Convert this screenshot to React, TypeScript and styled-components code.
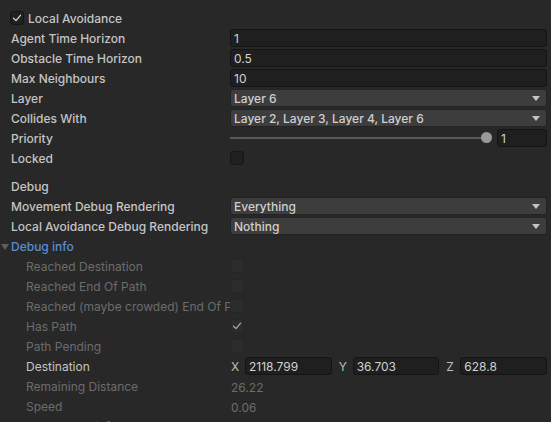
import React from 'react';
import styled, { createGlobalStyle } from 'styled-components';

// === Global ===
const GlobalStyle = createGlobalStyle`
  html, body {
    margin: 0;
    padding: 0;
    background: #282828;
  }
  body {
    font-family: Inter, 'Noto Sans', 'Liberation Sans', sans-serif;
    font-size: 12px;
    color: #c4c4c4;
    overflow: hidden;
  }
`;

// === Layout ===
const Inspector = styled.div`
  width: 551px;
  height: 422px;
  padding-top: 8px;
  box-sizing: border-box;
  overflow: hidden;
`;

const Row = styled.div<{ $spaceBefore?: number }>`
  display: grid;
  grid-template-columns: 230px 1fr;
  align-items: center;
  height: 20px;
  padding-right: 4px;
  margin-top: ${p => p.$spaceBefore ?? 0}px;
`;

type Tone = 'normal' | 'muted' | 'link';

const toneColor: Record<Tone, string> = {
  normal: '#c4c4c4',
  muted: '#6c6c6c',
  link: '#5b8bd4',
};

const Label = styled.div<{ $indent?: number; $tone?: Tone; $light?: boolean }>`
  padding-left: ${p => 11 + (p.$indent ?? 0)}px;
  padding-top: 2px;
  height: 20px;
  box-sizing: border-box;
  white-space: nowrap;
  overflow: hidden;
  font-weight: ${p => (p.$tone === 'muted' || p.$light ? 400 : 500)};
  color: ${p => toneColor[p.$tone ?? 'normal']};
  line-height: 18px;
  position: relative;
`;

const Foldout = styled.span`
  position: absolute;
  left: 1px;
  top: 8px;
  width: 0;
  height: 0;
  border-left: 4px solid transparent;
  border-right: 4px solid transparent;
  border-top: 6px solid #5e5e5e;
`;

const ToggleHeader = styled.div`
  display: flex;
  align-items: center;
  gap: 4px;
  height: 20px;
  padding-left: 10px;
  font-weight: 500;
`;

const HeaderText = styled.span`
  padding-top: 1px;
`;

// === Fields ===
const TextField = styled.div`
  height: 18px;
  box-sizing: border-box;
  background: #1f1f1f;
  border: 1px solid #141414;
  border-radius: 3px;
  padding-left: 3px;
  padding-top: 1px;
  line-height: 16px;
  color: #d2d2d2;
  white-space: nowrap;
  overflow: hidden;
  flex: 1;
  min-width: 0;
`;

const Dropdown = styled.div`
  height: 18px;
  box-sizing: border-box;
  background: #3d3d3d;
  border: 1px solid #232323;
  border-radius: 3px;
  padding: 1px 6px 0 3px;
  line-height: 16px;
  color: #cfcfcf;
  font-weight: 500;
  display: flex;
  align-items: center;
  justify-content: space-between;
`;

const Arrow = styled.span`
  width: 0;
  height: 0;
  border-left: 4px solid transparent;
  border-right: 4px solid transparent;
  border-top: 5px solid #c4c4c4;
`;

const Box = styled.div<{ $dim?: boolean }>`
  width: 14px;
  height: 14px;
  box-sizing: border-box;
  background: ${p => (p.$dim ? '#2c2c2c' : '#202020')};
  border: 1px solid ${p => (p.$dim ? '#262626' : '#161616')};
  border-radius: 3px;
  display: flex;
  align-items: center;
  justify-content: center;
`;

const SliderWrap = styled.div`
  display: flex;
  align-items: center;
`;

const Track = styled.div`
  flex: 1;
  height: 2px;
  background: #5a5a5a;
  position: relative;
  margin-right: 8px;
`;

const Thumb = styled.span`
  position: absolute;
  right: -3px;
  top: -5px;
  width: 11px;
  height: 11px;
  border-radius: 50%;
  background: #999999;
`;

const SliderValue = styled(TextField)`
  flex: 0 0 50px;
`;

const Plain = styled.div`
  color: #6c6c6c;
  padding: 2px 0 0 1px;
`;

const VectorWrap = styled.div`
  display: flex;
  gap: 6px;
`;

const Axis = styled.div`
  flex: 1;
  display: flex;
  align-items: center;
`;

const AxisName = styled.span`
  width: 14px;
  padding: 1px 0 0 1px;
  color: #bdbdbd;
`;

// === Bits ===
const Check = ({ dim }: { dim?: boolean }) => (
  <svg width="10" height="10" viewBox="0 0 10 10">
    <polyline
      points="1.5,5.2 4,7.6 8.6,2.2"
      fill="none"
      stroke={dim ? '#a8a8a8' : '#d6d6d6'}
      strokeWidth="1.3"
      strokeLinecap="round"
      strokeLinejoin="round"
    />
  </svg>
);

const Checkbox = ({ checked, dim }: { checked?: boolean; dim?: boolean }) => (
  <Box $dim={dim}>{checked && <Check dim={dim} />}</Box>
);

const Select = ({ value }: { value: string }) => (
  <Dropdown>
    <span>{value}</span>
    <Arrow />
  </Dropdown>
);

const debugFlags: { label: string; checked?: boolean }[] = [
  { label: 'Reached Destination' },
  { label: 'Reached End Of Path' },
  { label: 'Reached (maybe crowded) End Of Path' },
  { label: 'Has Path', checked: true },
  { label: 'Path Pending' },
];

// === Page ===
export default function App() {
  return (
    <>
      <GlobalStyle />
      <Inspector>
        <ToggleHeader>
          <Checkbox checked />
          <HeaderText>Local Avoidance</HeaderText>
        </ToggleHeader>

        <Row>
          <Label>Agent Time Horizon</Label>
          <TextField>1</TextField>
        </Row>
        <Row>
          <Label>Obstacle Time Horizon</Label>
          <TextField>0.5</TextField>
        </Row>
        <Row>
          <Label>Max Neighbours</Label>
          <TextField>10</TextField>
        </Row>
        <Row>
          <Label>Layer</Label>
          <Select value="Layer 6" />
        </Row>
        <Row>
          <Label>Collides With</Label>
          <Select value="Layer 2, Layer 3, Layer 4, Layer 6" />
        </Row>
        <Row>
          <Label>Priority</Label>
          <SliderWrap>
            <Track>
              <Thumb />
            </Track>
            <SliderValue>1</SliderValue>
          </SliderWrap>
        </Row>
        <Row>
          <Label>Locked</Label>
          <Checkbox />
        </Row>

        <Row $spaceBefore={8}>
          <Label>Debug</Label>
        </Row>
        <Row>
          <Label>Movement Debug Rendering</Label>
          <Select value="Everything" />
        </Row>
        <Row>
          <Label>Local Avoidance Debug Rendering</Label>
          <Select value="Nothing" />
        </Row>
        <Row>
          <Label $tone="link">
            <Foldout />
            Debug info
          </Label>
        </Row>

        {debugFlags.map(f => (
          <Row key={f.label}>
            <Label $indent={15} $tone="muted">{f.label}</Label>
            <Checkbox dim checked={f.checked} />
          </Row>
        ))}

        <Row>
          <Label $indent={15} $light>Destination</Label>
          <VectorWrap>
            <Axis>
              <AxisName>X</AxisName>
              <TextField>2118.799</TextField>
            </Axis>
            <Axis>
              <AxisName>Y</AxisName>
              <TextField>36.703</TextField>
            </Axis>
            <Axis>
              <AxisName>Z</AxisName>
              <TextField>628.8</TextField>
            </Axis>
          </VectorWrap>
        </Row>
        <Row>
          <Label $indent={15} $tone="muted">Remaining Distance</Label>
          <Plain>26.22</Plain>
        </Row>
        <Row>
          <Label $indent={15} $tone="muted">Speed</Label>
          <Plain>0.06</Plain>
        </Row>
        <Row>
          <Label $indent={15} $tone="muted">Debug path information</Label>
        </Row>
      </Inspector>
    </>
  );
}
